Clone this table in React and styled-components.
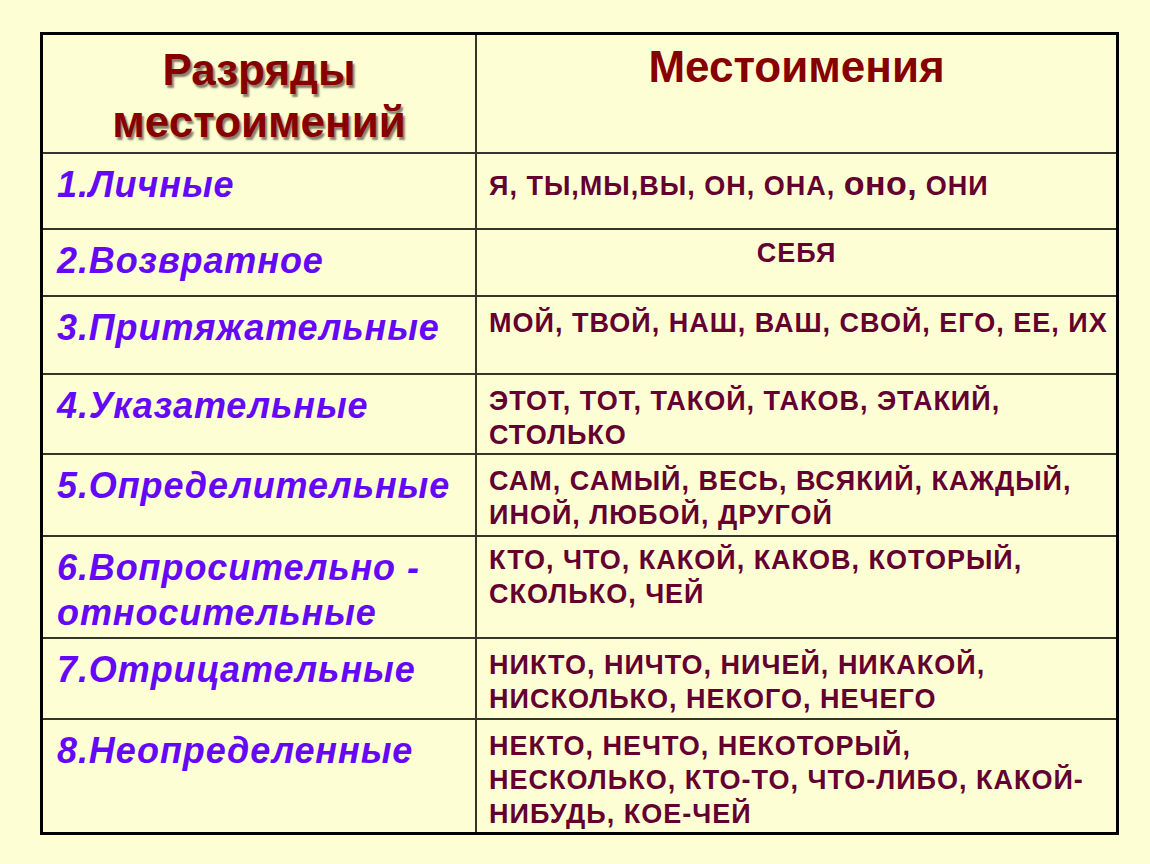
import React from "react";
import styled, { createGlobalStyle } from "styled-components";

const GlobalStyle = createGlobalStyle`
  html, body {
    margin: 0;
    padding: 0;
    background: #fefed4;
  }
  * {
    box-sizing: border-box;
  }
`;

const Page = styled.div`
  width: 1150px;
  height: 864px;
  padding: 32px 0 0 40px;
  background: #fefed4;
`;

const Table = styled.div`
  width: 1079px;
  border: 3px solid #000;
  display: flex;
  flex-direction: column;
`;

const Row = styled.div`
  display: grid;
  grid-template-columns: 434px 1fr;
  height: ${(p) => p.h}px;
  border-top: ${(p) => (p.first ? "none" : "2px solid #35352a")};
`;

const HeadCell = styled.div`
  border-right: ${(p) => (p.last ? "none" : "2px solid #35352a")};
  padding-top: ${(p) => p.pt}px;
  text-align: center;
  font-family: "Liberation Sans", Arial, sans-serif;
  font-weight: bold;
  font-size: 44px;
  line-height: 52px;
  color: #870000;
  text-shadow: ${(p) => (p.shadow ? "2px 3px 2px rgba(40, 20, 20, 0.55)" : "none")};
`;

const Label = styled.div`
  border-right: 2px solid #35352a;
  padding: 8px 0 0 14px;
  font-family: "Liberation Sans", Arial, sans-serif;
  font-weight: bold;
  font-style: italic;
  font-size: 36px;
  line-height: 45px;
  letter-spacing: 0.9px;
  color: #6408f6;
  white-space: nowrap;
`;

const Value = styled.div`
  padding: ${(p) => p.pt || 9}px 12px 0 12px;
  font-family: "Liberation Sans", Arial, sans-serif;
  font-weight: bold;
  font-size: 27px;
  line-height: 34px;
  letter-spacing: 1px;
  color: #640030;
  white-space: nowrap;
  text-align: ${(p) => (p.center ? "center" : "left")};
`;

const Big = styled.span`
  font-size: 34px;
  letter-spacing: 0.5px;
`;

const rows = [
  { h: 76, label: ["1.Личные"], value: null, pt: 12 },
  { h: 67, label: ["2.Возвратное"], value: ["СЕБЯ"], center: true, pt: 6 },
  { h: 78, label: ["3.Притяжательные"], value: ["МОЙ, ТВОЙ, НАШ, ВАШ, СВОЙ, ЕГО, ЕЕ, ИХ"] },
  { h: 80, label: ["4.Указательные"], value: ["ЭТОТ, ТОТ, ТАКОЙ, ТАКОВ, ЭТАКИЙ,", "СТОЛЬКО"] },
  { h: 82, label: ["5.Определительные"], value: ["САМ, САМЫЙ, ВЕСЬ, ВСЯКИЙ, КАЖДЫЙ,", "ИНОЙ, ЛЮБОЙ, ДРУГОЙ"] },
  { h: 102, label: ["6.Вопросительно -", "относительные"], value: ["КТО, ЧТО, КАКОЙ, КАКОВ, КОТОРЫЙ,", "СКОЛЬКО, ЧЕЙ"], pt: 6 },
  { h: 81, label: ["7.Отрицательные"], value: ["НИКТО, НИЧТО, НИЧЕЙ, НИКАКОЙ,", "НИСКОЛЬКО, НЕКОГО, НЕЧЕГО"] },
  {
    h: 114,
    label: ["8.Неопределенные"],
    value: ["НЕКТО, НЕЧТО, НЕКОТОРЫЙ,", "НЕСКОЛЬКО, КТО-ТО, ЧТО-ЛИБО, КАКОЙ-", "НИБУДЬ, КОЕ-ЧЕЙ"],
  },
];

const Lines = ({ items }) =>
  items.map((t, i) => (
    <React.Fragment key={i}>
      {i > 0 && <br />}
      {t}
    </React.Fragment>
  ));

const App = () => {
  return (
    <Page>
      <GlobalStyle />
      <Table>
        <Row h={117} first>
          <HeadCell pt={9} shadow>
            Разряды
            <br />
            местоимений
          </HeadCell>
          <HeadCell pt={6} last>
            Местоимения
          </HeadCell>
        </Row>
        {rows.map((r, i) => (
          <Row key={i} h={r.h}>
            <Label>
              <Lines items={r.label} />
            </Label>
            <Value center={r.center} pt={r.pt}>
              {r.value ? (
                <Lines items={r.value} />
              ) : (
                <>
                  Я, ТЫ,МЫ,ВЫ, ОН, ОНА, <Big>оно,</Big> ОНИ
                </>
              )}
            </Value>
          </Row>
        ))}
      </Table>
    </Page>
  );
};

export default App;
